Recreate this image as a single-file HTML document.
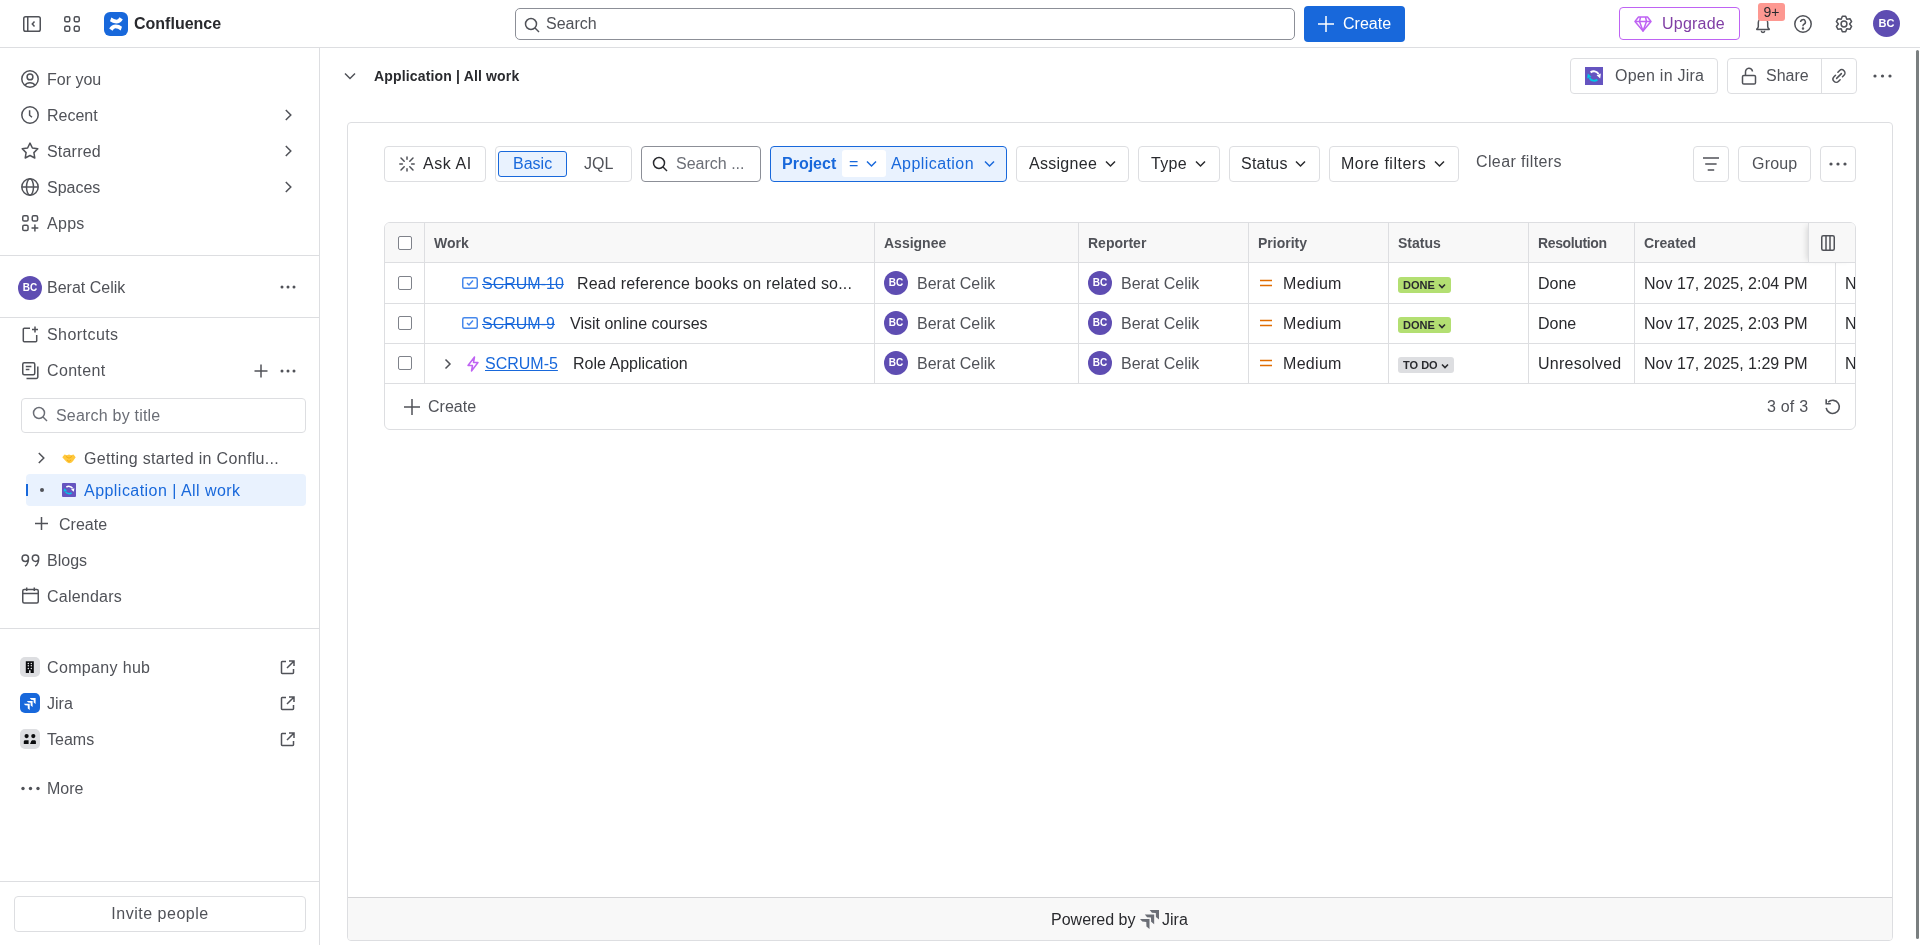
<!DOCTYPE html>
<html><head><meta charset="utf-8">
<style>
*{box-sizing:border-box;margin:0;padding:0}
html,body{width:1920px;height:945px;overflow:hidden;background:#fff;font-family:"Liberation Sans",sans-serif;font-size:16px;color:#292a2e}
.a{position:absolute}
.t{position:absolute;white-space:nowrap;line-height:22px}
svg{display:block;position:absolute}
.sub{color:#505258}
.btn{position:absolute;border:1px solid #dddee1;border-radius:4px;background:#fff}
.hl{position:absolute;background:#dddee1}
.wrap{position:absolute;left:0;top:0;width:1920px;height:945px;will-change:transform}
</style></head><body><div class="wrap">

<!-- ============ TOP BAR ============ -->
<div class="hl" style="left:0;top:47px;width:1920px;height:1px"></div>

<!-- sidebar toggle -->
<svg style="left:23px;top:16px" width="18" height="16" viewBox="0 0 18 16" fill="none" stroke="#505258" stroke-width="1.5"><rect x="0.75" y="0.75" width="16.5" height="14.5" rx="1.8"/><path d="M4.75 1v14"/><path d="M11.5 5.6 9.3 8l2.2 2.4"/></svg>
<!-- apps grid -->
<svg style="left:64px;top:16px" width="16" height="16" viewBox="0 0 16 16" fill="none" stroke="#505258" stroke-width="1.5"><rect x="0.75" y="0.75" width="5" height="5" rx="1.5"/><rect x="10.25" y="0.75" width="5" height="5" rx="1.5"/><rect x="0.75" y="10.25" width="5" height="5" rx="1.5"/><rect x="10.25" y="10.25" width="5" height="5" rx="1.5"/></svg>
<!-- confluence logo -->
<div class="a" style="left:104px;top:12px;width:24px;height:24px;border-radius:6px;background:#1868db"></div>
<svg style="left:104px;top:12px" width="24" height="24" viewBox="0 0 24 24" fill="#fff"><path d="M7.3 5.6Q10 7.6 12.7 7.7Q14.3 7.5 15.5 5.3L18.8 7.5Q16.5 11.4 12.2 11.4Q8.5 11.4 6 9.3Z"/><path d="M16.7 18.4Q14 16.4 11.3 16.3Q9.7 16.5 8.5 18.7L5.2 16.5Q7.5 12.6 11.8 12.6Q15.5 12.6 18 14.7Z"/></svg>
<div class="t" style="left:134px;top:13px;font-weight:700;font-size:16px;color:#292a2e">Confluence</div>

<!-- search -->
<div class="a" style="left:515px;top:8px;width:780px;height:32px;border:1px solid #8c8f97;border-radius:5px"></div>
<svg style="left:524px;top:17px" width="16" height="16" viewBox="0 0 16 16" fill="none" stroke="#505258" stroke-width="1.5"><circle cx="7" cy="7" r="5.5"/><path d="M11 11l4 4"/></svg>
<div class="t sub" style="left:546px;top:13px">Search</div>

<!-- create -->
<div class="a" style="left:1304px;top:6px;width:101px;height:36px;border-radius:4px;background:#1868db"></div>
<svg style="left:1318px;top:16px" width="16" height="16" viewBox="0 0 16 16" fill="none" stroke="#fff" stroke-width="1.5"><path d="M8 0v16M0 8h16"/></svg>
<div class="t" style="left:1343px;top:13px;color:#fff">Create</div>

<!-- upgrade -->
<div class="a" style="left:1619px;top:7px;width:121px;height:33px;border:1.5px solid #bf63f3;border-radius:4px"></div>
<svg style="left:1634px;top:16px" width="18" height="16" viewBox="0 0 18 16" fill="none" stroke="#bf63f3" stroke-width="1.5" stroke-linejoin="round"><path d="M4.5 1h9l3.5 4.5L9 15 1 5.5z"/><path d="M1 5.5h16M6.5 1 5.5 5.5 9 15l3.5-9.5-1-4.5"/></svg>
<div class="t" style="left:1662px;top:13px;color:#803fa5;letter-spacing:0.23px">Upgrade</div>

<!-- bell -->
<svg style="left:1755px;top:15px" width="16" height="19" viewBox="0 0 16 19" fill="none" stroke="#505258" stroke-width="1.5" stroke-linejoin="round"><path d="M3.3 7.8a4.7 4.7 0 0 1 9.4 0v3.6c0 1 .5 1.8 1.5 2.6v.6H1.8v-.6c1-.8 1.5-1.6 1.5-2.6z"/><path d="M6.3 15.8a1.7 1.7 0 0 0 3.4 0"/></svg>
<div class="a" style="left:1758px;top:3px;width:27px;height:18px;border-radius:3px;background:#fd9891"></div>
<div class="t" style="left:1758px;top:1px;width:27px;text-align:center;font-size:14px;color:#292a2e">9+</div>
<!-- help -->
<svg style="left:1794px;top:15px" width="18" height="18" viewBox="0 0 18 18" fill="none" stroke="#505258" stroke-width="1.5"><circle cx="9" cy="9" r="8.2"/><path d="M6.6 7a2.4 2.4 0 1 1 3.4 2.2c-.6.3-1 .8-1 1.5v.6"/><circle cx="9" cy="13.5" r=".5" fill="#505258"/></svg>
<!-- gear -->
<svg style="left:1835px;top:15px" width="18" height="18" viewBox="0 0 18 18" fill="none" stroke="#505258" stroke-width="1.5" stroke-linejoin="round"><path d="M7.34 1.17 L10.66 1.17 L11.80 4.15 L14.95 3.65 L16.61 6.53 L14.60 9.00 L16.61 11.47 L14.95 14.35 L11.80 13.85 L10.66 16.83 L7.34 16.83 L6.20 13.85 L3.05 14.35 L1.39 11.47 L3.40 9.00 L1.39 6.53 L3.05 3.65 L6.20 4.15Z"/><circle cx="9" cy="9" r="2.9"/></svg>
<!-- avatar -->
<div class="a" style="left:1873px;top:10px;width:27px;height:27px;border-radius:50%;background:#5e4db2;color:#fff;font-weight:700;font-size:11px;line-height:27px;text-align:center">BC</div>

<!-- scrollbar -->
<div class="a" style="left:1916px;top:50px;width:3px;height:889px;border-radius:2px;background:#7a7f80"></div>

<!-- ============ SIDEBAR ============ -->
<div class="hl" style="left:319px;top:48px;width:1px;height:897px"></div>


<!-- nav items -->
<svg style="left:21px;top:70px" width="18" height="18" viewBox="0 0 18 18" fill="none" stroke="#505258" stroke-width="1.5"><circle cx="9" cy="9" r="8.2"/><circle cx="9" cy="6.9" r="2.9"/><path d="M3.9 15.3c1.1-1.7 2.9-2.6 5.1-2.6s4 .9 5.1 2.6"/></svg>
<div class="t sub" style="left:47px;top:69px">For you</div>

<svg style="left:21px;top:106px" width="18" height="18" viewBox="0 0 18 18" fill="none" stroke="#505258" stroke-width="1.5"><circle cx="9" cy="9" r="8.2"/><path d="M8.6 4.3v4.9l2.4 2.1"/></svg>
<div class="t sub" style="left:47px;top:105px">Recent</div>
<svg style="left:283px;top:109px" width="10" height="12" viewBox="0 0 10 12" fill="none" stroke="#505258" stroke-width="1.5"><path d="M2.8 1 7.8 6l-5 5"/></svg>

<svg style="left:21px;top:142px" width="18" height="18" viewBox="0 0 18 18" fill="none" stroke="#505258" stroke-width="1.5" stroke-linejoin="round"><path d="M9 1.1l2.4 4.9 5.4.8-3.9 3.8.9 5.4L9 13.5 4.2 16l.9-5.4L1.2 6.8l5.4-.8z"/></svg>
<div class="t sub" style="left:47px;top:141px;letter-spacing:0.2px">Starred</div>
<svg style="left:283px;top:145px" width="10" height="12" viewBox="0 0 10 12" fill="none" stroke="#505258" stroke-width="1.5"><path d="M2.8 1 7.8 6l-5 5"/></svg>

<svg style="left:21px;top:178px" width="18" height="18" viewBox="0 0 18 18" fill="none" stroke="#505258" stroke-width="1.5"><circle cx="9" cy="9" r="8.2"/><ellipse cx="9" cy="9" rx="3.5" ry="8.2"/><path d="M1 9h16"/></svg>
<div class="t sub" style="left:47px;top:177px">Spaces</div>
<svg style="left:283px;top:181px" width="10" height="12" viewBox="0 0 10 12" fill="none" stroke="#505258" stroke-width="1.5"><path d="M2.8 1 7.8 6l-5 5"/></svg>

<svg style="left:22px;top:215px" width="17" height="17" viewBox="0 0 17 17" fill="none" stroke="#505258" stroke-width="1.5"><rect x="0.75" y="0.75" width="5.3" height="5.3" rx="1.4"/><rect x="10.25" y="0.75" width="5.3" height="5.3" rx="1.4"/><rect x="0.75" y="10.25" width="5.3" height="5.3" rx="1.4"/><path d="M12.9 9.6v6.8M9.5 13h6.8"/></svg>
<div class="t sub" style="left:47px;top:213px;letter-spacing:0.3px">Apps</div>

<div class="hl" style="left:0;top:255px;width:319px;height:1px"></div>

<div class="a" style="left:18px;top:276px;width:24px;height:24px;border-radius:50%;background:#5e4db2;color:#fff;font-weight:700;font-size:10px;line-height:24px;text-align:center">BC</div>
<div class="t sub" style="left:47px;top:277px">Berat Celik</div>
<svg style="left:280px;top:285px" width="16" height="4" viewBox="0 0 16 4" fill="#505258"><circle cx="2" cy="2" r="1.5"/><circle cx="8" cy="2" r="1.5"/><circle cx="14" cy="2" r="1.5"/></svg>

<div class="hl" style="left:0;top:317px;width:319px;height:1px"></div>

<svg style="left:22px;top:326px" width="17" height="17" viewBox="0 0 17 17" fill="none" stroke="#505258" stroke-width="1.5"><path d="M8 2.2H2.3a1 1 0 0 0-1 1v11.5a1 1 0 0 0 1 1h11.4a1 1 0 0 0 1-1V9"/><path d="M13 0.5v6M10 3.5h6"/></svg>
<div class="t sub" style="left:47px;top:324px;letter-spacing:0.44px">Shortcuts</div>

<svg style="left:22px;top:362px" width="17" height="18" viewBox="0 0 17 18" fill="none" stroke="#505258" stroke-width="1.5"><rect x="0.75" y="0.75" width="12" height="12" rx="1.5"/><path d="M3.8 4.6h5.6M3.8 7.6h3.6"/><path d="M15.8 4.5v10.5a1.5 1.5 0 0 1-1.5 1.5H4.5"/></svg>
<div class="t sub" style="left:47px;top:360px;letter-spacing:0.34px">Content</div>
<svg style="left:253px;top:363px" width="16" height="16" viewBox="0 0 16 16" fill="none" stroke="#505258" stroke-width="1.5"><path d="M8 1.5v13M1.5 8h13"/></svg>
<svg style="left:280px;top:369px" width="16" height="4" viewBox="0 0 16 4" fill="#505258"><circle cx="2" cy="2" r="1.5"/><circle cx="8" cy="2" r="1.5"/><circle cx="14" cy="2" r="1.5"/></svg>

<div class="a" style="left:21px;top:398px;width:285px;height:35px;border:1px solid #dddee1;border-radius:4px"></div>
<svg style="left:32px;top:406px" width="16" height="16" viewBox="0 0 16 16" fill="none" stroke="#6b6e76" stroke-width="1.5"><circle cx="7" cy="7" r="5.5"/><path d="M11 11l4 4"/></svg>
<div class="t" style="left:56px;top:405px;color:#6b6e76;letter-spacing:0.2px">Search by title</div>

<svg style="left:36px;top:452px" width="10" height="12" viewBox="0 0 10 12" fill="none" stroke="#505258" stroke-width="1.5"><path d="M2.8 1 7.8 6l-5 5"/></svg>
<svg style="left:62px;top:453px" width="14" height="11" viewBox="0 0 14 11"><path d="M0.3 4.2 2.5 1.6 5 2.3 7 1.4l2 .9 2.5-.7 2.2 2.6-2.6 3.9-1.8 1.6L7 10.3 5 9.3 3 7.2z" fill="#ffc83d"/><path d="M4 3.5 7 5.2l3-1.8M5 7l2 1.5 2-1.6" stroke="#f0a30a" stroke-width=".8" fill="none"/></svg>
<div class="t sub" style="left:84px;top:448px;letter-spacing:0.33px">Getting started in Conflu...</div>

<div class="a" style="left:26px;top:474px;width:280px;height:32px;border-radius:4px;background:#e9f2fe"></div>
<div class="a" style="left:26px;top:484px;width:2px;height:12px;background:#1868db"></div>
<div class="a" style="left:40px;top:488px;width:4px;height:4px;border-radius:50%;background:#505258"></div>
<div class="a" style="left:62px;top:483px;width:14px;height:14px;border-radius:1px;background:#6554c0"></div>
<svg style="left:62px;top:483px" width="14" height="14" viewBox="0 0 18 18"><path d="M5.6 5.4C8 3.6 11.6 3.9 13.6 7" fill="none" stroke="#fff" stroke-width="2"/><path d="M11.6 8.2 15.9 6.6 15.2 11.4z" fill="#fff"/><path d="M12.3 12.6C10 14.4 6.4 14.1 4.4 11" fill="none" stroke="#00c7e6" stroke-width="2"/><path d="M6.4 9.8 2.1 11.4 2.8 6.6z" fill="#00c7e6"/></svg>
<div class="t" style="left:84px;top:480px;color:#1868db;letter-spacing:0.46px">Application | All work</div>

<svg style="left:34px;top:516px" width="15" height="15" viewBox="0 0 15 15" fill="none" stroke="#505258" stroke-width="1.5"><path d="M7.5 1v13M1 7.5h13"/></svg>
<div class="t sub" style="left:59px;top:514px">Create</div>

<svg style="left:21px;top:553px" width="19" height="14" viewBox="0 0 19 14" fill="none" stroke="#505258" stroke-width="1.5"><path d="M7.5 5.2a3.2 3.2 0 1 1-6.4 0 3.2 3.2 0 0 1 6.4 0zM7.5 5.2c0 4-1.2 6.5-3.5 8M17.7 5.2a3.2 3.2 0 1 1-6.4 0 3.2 3.2 0 0 1 6.4 0zM17.7 5.2c0 4-1.2 6.5-3.5 8"/></svg>
<div class="t sub" style="left:47px;top:550px">Blogs</div>

<svg style="left:22px;top:587px" width="17" height="17" viewBox="0 0 17 17" fill="none" stroke="#505258" stroke-width="1.5"><rect x="0.75" y="2.5" width="15.5" height="13.5" rx="1.5"/><path d="M1 6.5h15M4.7 0.5v3.5M12.3 0.5v3.5"/></svg>
<div class="t sub" style="left:47px;top:586px;letter-spacing:0.23px">Calendars</div>

<div class="hl" style="left:0;top:628px;width:319px;height:1px"></div>

<div class="a" style="left:20px;top:657px;width:20px;height:20px;border-radius:5px;background:#dddee1"></div>
<svg style="left:20px;top:657px" width="20" height="20" viewBox="0 0 20 20"><path d="M5.8 4.2h8v11.7h-3.2v-2.7H9v2.7H5.8z" fill="#0b0c0e"/><g fill="#e8e9eb"><circle cx="8.3" cy="6.5" r=".75"/><circle cx="11.3" cy="6.5" r=".75"/><circle cx="8.3" cy="8.7" r=".75"/><circle cx="11.3" cy="8.7" r=".75"/><circle cx="8.3" cy="11.5" r=".75"/><circle cx="11.3" cy="11.5" r=".75"/></g></svg>
<div class="t sub" style="left:47px;top:657px;letter-spacing:0.34px">Company hub</div>
<svg style="left:280px;top:660px" width="15" height="15" viewBox="0 0 15 15" fill="none" stroke="#505258" stroke-width="1.5"><path d="M6 1.5H2.2a.8.8 0 0 0-.7.8v10.5c0 .4.3.7.7.7h10.5c.4 0 .8-.3.8-.7V9"/><path d="M9 1h5v5M13.8 1.2 7 8"/></svg>

<div class="a" style="left:20px;top:693px;width:20px;height:20px;border-radius:5px;background:#1868db"></div>
<svg style="left:20px;top:693px" width="20" height="20" viewBox="0 0 20 20" fill="#fff"><path d="M9.8 5.1h5.8v5.9l-1.9-1.5-.1-2.5-2.4-.2z"/><path d="M6.8 7.9h5.8v6l-1.9-1.5-.1-2.6-2.4-.2z"/><path d="M3.8 10.7h5.9v6.2l-1.9-1.5-.1-2.8-2.5-.3z"/></svg>
<div class="t sub" style="left:47px;top:693px">Jira</div>
<svg style="left:280px;top:696px" width="15" height="15" viewBox="0 0 15 15" fill="none" stroke="#505258" stroke-width="1.5"><path d="M6 1.5H2.2a.8.8 0 0 0-.7.8v10.5c0 .4.3.7.7.7h10.5c.4 0 .8-.3.8-.7V9"/><path d="M9 1h5v5M13.8 1.2 7 8"/></svg>

<div class="a" style="left:20px;top:729px;width:20px;height:20px;border-radius:5px;background:#dddee1"></div>
<svg style="left:20px;top:729px" width="20" height="20" viewBox="0 0 20 20" fill="#0b0c0e"><circle cx="6.6" cy="7.1" r="2.1"/><circle cx="13.3" cy="7.1" r="2.1"/><path d="M3.8 15v-2.3c0-.8.6-1.4 1.4-1.4h3.4v3.7zM10 15l1-2.3c.3-.8.8-1.4 1.6-1.4h1.9c.8 0 1.4.6 1.4 1.4V15z"/></svg>
<div class="t sub" style="left:47px;top:729px">Teams</div>
<svg style="left:280px;top:732px" width="15" height="15" viewBox="0 0 15 15" fill="none" stroke="#505258" stroke-width="1.5"><path d="M6 1.5H2.2a.8.8 0 0 0-.7.8v10.5c0 .4.3.7.7.7h10.5c.4 0 .8-.3.8-.7V9"/><path d="M9 1h5v5M13.8 1.2 7 8"/></svg>

<svg style="left:21px;top:786px" width="19" height="5" viewBox="0 0 19 5" fill="#505258"><circle cx="2" cy="2.5" r="1.7"/><circle cx="9.5" cy="2.5" r="1.7"/><circle cx="17" cy="2.5" r="1.7"/></svg>
<div class="t sub" style="left:47px;top:778px">More</div>

<div class="hl" style="left:0;top:881px;width:319px;height:1px"></div>
<div class="a" style="left:14px;top:896px;width:292px;height:36px;border:1px solid #dddee1;border-radius:4px"></div>
<div class="t sub" style="left:14px;top:903px;width:292px;text-align:center;letter-spacing:0.52px">Invite people</div>


<!-- ============ MAIN ============ -->
<svg style="left:344px;top:72px" width="12" height="8" viewBox="0 0 12 8" fill="none" stroke="#505258" stroke-width="1.5"><path d="M1 1.5l5 5 5-5"/></svg>
<div class="t" style="left:374px;top:65px;font-weight:700;font-size:14px;color:#292a2e;letter-spacing:0.16px">Application | All work</div>

<div class="btn" style="left:1570px;top:58px;width:148px;height:36px"></div>
<div class="a" style="left:1585px;top:67px;width:18px;height:18px;background:#6554c0"></div>
<svg style="left:1585px;top:67px" width="18" height="18" viewBox="0 0 18 18"><path d="M5.6 5.4C8 3.6 11.6 3.9 13.6 7" fill="none" stroke="#fff" stroke-width="2"/><path d="M11.6 8.2 15.9 6.6 15.2 11.4z" fill="#fff"/><path d="M12.3 12.6C10 14.4 6.4 14.1 4.4 11" fill="none" stroke="#00c7e6" stroke-width="2"/><path d="M6.4 9.8 2.1 11.4 2.8 6.6z" fill="#00c7e6"/></svg>
<div class="t sub" style="left:1615px;top:65px;letter-spacing:0.25px">Open in Jira</div>

<div class="btn" style="left:1727px;top:58px;width:130px;height:36px"></div>
<div class="a" style="left:1821px;top:58px;width:1px;height:36px;background:#dddee1"></div>
<svg style="left:1741px;top:67px" width="16" height="18" viewBox="0 0 16 18" fill="none" stroke="#505258" stroke-width="1.5"><rect x="1.5" y="8.5" width="13" height="8.5" rx="1.3"/><path d="M4.5 8.5V5a3.5 3.5 0 0 1 7-0.5"/></svg>
<div class="t sub" style="left:1766px;top:65px">Share</div>
<svg style="left:1831px;top:68px" width="16" height="16" viewBox="0 0 16 16" fill="none" stroke="#505258" stroke-width="1.5" stroke-linecap="round"><path d="M5.6 10.4l4.8-4.8"/><path d="M6.9 4.2l1.5-1.5a3.2 3.2 0 0 1 4.6 4.6l-1.5 1.5"/><path d="M9.1 11.8l-1.5 1.5a3.2 3.2 0 0 1-4.6-4.6l1.5-1.5"/></svg>
<svg style="left:1873px;top:74px" width="19" height="4" viewBox="0 0 19 4" fill="#505258"><circle cx="2" cy="2" r="1.6"/><circle cx="9.5" cy="2" r="1.6"/><circle cx="17" cy="2" r="1.6"/></svg>

<!-- Jira container -->
<div class="a" style="left:347px;top:122px;width:1546px;height:819px;border:1px solid #dddee1;border-radius:4px;overflow:hidden">
  <div class="a" style="left:0;top:774px;width:1544px;height:44px;background:#f8f8f8;border-top:1px solid #d4d4d6"></div>
</div>
<div class="t" style="left:1051px;top:909px;color:#292a2e">Powered by</div>
<svg style="left:1140px;top:910px" width="19" height="19" viewBox="3.8 5.1 11.8 11.8" fill="#6b6e76"><path d="M9.8 5.1h5.8v5.9l-1.9-1.5-.1-2.5-2.4-.2z"/><path d="M6.8 7.9h5.8v6l-1.9-1.5-.1-2.6-2.4-.2z"/><path d="M3.8 10.7h5.9v6.2l-1.9-1.5-.1-2.8-2.5-.3z"/></svg>
<div class="t" style="left:1162px;top:909px;color:#292a2e">Jira</div>

<!-- filter bar -->
<div class="btn" style="left:384px;top:146px;width:102px;height:36px"></div>
<svg style="left:399px;top:156px" width="16" height="16" viewBox="0 0 16 16" fill="none" stroke="#505258" stroke-width="1.5" stroke-linecap="round"><path d="M8 1v2.2M8 12.8V15M0.8 8h2.6M12.6 8h2.6M2 2l3.2 3.2M10.8 10.8 14 14M2 14l3.2-3.2M10.8 5.2 14 2"/></svg>
<div class="t" style="left:423px;top:153px;color:#292a2e;letter-spacing:0.55px">Ask AI</div>

<div class="btn" style="left:495px;top:146px;width:137px;height:36px"></div>
<div class="a" style="left:498px;top:151px;width:69px;height:26px;border:1px solid #1868db;border-radius:3px;background:#e9f2fe"></div>
<div class="t" style="left:513px;top:153px;color:#1868db">Basic</div>
<div class="t sub" style="left:584px;top:153px">JQL</div>

<div class="a" style="left:641px;top:146px;width:120px;height:36px;border:1px solid #8c8f97;border-radius:4px"></div>
<svg style="left:652px;top:156px" width="16" height="16" viewBox="0 0 16 16" fill="none" stroke="#292a2e" stroke-width="1.5"><circle cx="7" cy="7" r="5.5"/><path d="M11 11l4 4"/></svg>
<div class="t" style="left:676px;top:153px;color:#6b6e76">Search ...</div>

<div class="a" style="left:770px;top:146px;width:237px;height:36px;border:1px solid #1868db;border-radius:4px;background:#e9f2fe"></div>
<div class="t" style="left:782px;top:153px;font-weight:700;color:#1868db">Project</div>
<div class="a" style="left:842px;top:150px;width:44px;height:27px;border-radius:3px;background:#fff"></div>
<div class="t" style="left:849px;top:153px;color:#1868db">=</div>
<svg style="left:866px;top:160px" width="11" height="8" viewBox="0 0 11 8" fill="none" stroke="#1868db" stroke-width="1.5"><path d="M1 1.5l4.5 4.5 4.5-4.5"/></svg>
<div class="t" style="left:891px;top:153px;color:#1868db;letter-spacing:0.43px">Application</div>
<svg style="left:984px;top:160px" width="11" height="8" viewBox="0 0 11 8" fill="none" stroke="#1868db" stroke-width="1.5"><path d="M1 1.5l4.5 4.5 4.5-4.5"/></svg>

<div class="btn" style="left:1016px;top:146px;width:113px;height:36px"></div>
<div class="t" style="left:1029px;top:153px;color:#292a2e;letter-spacing:0.28px">Assignee</div>
<svg style="left:1105px;top:160px" width="11" height="8" viewBox="0 0 11 8" fill="none" stroke="#292a2e" stroke-width="1.5"><path d="M1 1.5l4.5 4.5 4.5-4.5"/></svg>

<div class="btn" style="left:1138px;top:146px;width:82px;height:36px"></div>
<div class="t" style="left:1151px;top:153px;color:#292a2e;letter-spacing:0.33px">Type</div>
<svg style="left:1195px;top:160px" width="11" height="8" viewBox="0 0 11 8" fill="none" stroke="#292a2e" stroke-width="1.5"><path d="M1 1.5l4.5 4.5 4.5-4.5"/></svg>

<div class="btn" style="left:1229px;top:146px;width:91px;height:36px"></div>
<div class="t" style="left:1241px;top:153px;color:#292a2e;letter-spacing:0.22px">Status</div>
<svg style="left:1295px;top:160px" width="11" height="8" viewBox="0 0 11 8" fill="none" stroke="#292a2e" stroke-width="1.5"><path d="M1 1.5l4.5 4.5 4.5-4.5"/></svg>

<div class="btn" style="left:1329px;top:146px;width:130px;height:36px"></div>
<div class="t" style="left:1341px;top:153px;color:#292a2e;letter-spacing:0.5px">More filters</div>
<svg style="left:1434px;top:160px" width="11" height="8" viewBox="0 0 11 8" fill="none" stroke="#292a2e" stroke-width="1.5"><path d="M1 1.5l4.5 4.5 4.5-4.5"/></svg>

<div class="t sub" style="left:1476px;top:151px;letter-spacing:0.38px">Clear filters</div>

<div class="btn" style="left:1693px;top:146px;width:36px;height:36px"></div>
<svg style="left:1703px;top:156px" width="16" height="16" viewBox="0 0 16 16" fill="none" stroke="#505258" stroke-width="1.5"><path d="M0 2h16M2.2 8h11.4M4.7 14h6.5"/></svg>
<div class="btn" style="left:1738px;top:146px;width:73px;height:36px"></div>
<div class="t sub" style="left:1752px;top:153px;letter-spacing:0.2px">Group</div>
<div class="btn" style="left:1820px;top:146px;width:36px;height:36px"></div>
<svg style="left:1829px;top:162px" width="18" height="4" viewBox="0 0 18 4" fill="#505258"><circle cx="2" cy="2" r="1.6"/><circle cx="9" cy="2" r="1.6"/><circle cx="16" cy="2" r="1.6"/></svg>


<!-- table -->
<div class="a" style="left:384px;top:222px;width:1472px;height:208px;border:1px solid #dddee1;border-radius:6px;overflow:hidden">
  <div class="a" style="left:0;top:0;width:1470px;height:40px;background:#f8f8f8;border-bottom:1px solid #dddee1"></div>
  <div class="a" style="left:0;top:80px;width:1470px;height:1px;background:#dddee1"></div>
  <div class="a" style="left:0;top:120px;width:1470px;height:1px;background:#dddee1"></div>
  <div class="a" style="left:0;top:160px;width:1470px;height:1px;background:#dddee1"></div>
  <div class="a" style="left:39px;top:0;width:1px;height:161px;background:#dddee1"></div>
  <div class="a" style="left:489px;top:0;width:1px;height:161px;background:#dddee1"></div>
  <div class="a" style="left:693px;top:0;width:1px;height:161px;background:#dddee1"></div>
  <div class="a" style="left:863px;top:0;width:1px;height:161px;background:#dddee1"></div>
  <div class="a" style="left:1003px;top:0;width:1px;height:161px;background:#dddee1"></div>
  <div class="a" style="left:1143px;top:0;width:1px;height:161px;background:#dddee1"></div>
  <div class="a" style="left:1249px;top:0;width:1px;height:161px;background:#dddee1"></div>
  <div class="a" style="left:1450px;top:40px;width:1px;height:121px;background:#dddee1"></div>
  <div class="a" style="left:1423px;top:0;width:47px;height:40px;background:#f8f8f8;border-left:1px solid #dddee1;border-bottom:1px solid #dddee1;box-shadow:-4px 0 6px -3px rgba(0,0,0,.15)"></div>
</div>
<svg style="left:1821px;top:235px" width="14" height="16" viewBox="0 0 14 16" fill="none" stroke="#505258" stroke-width="1.5"><rect x="0.75" y="0.75" width="12.5" height="14.5" rx="1.5"/><path d="M5 1v14M9 1v14"/></svg>
<div class="a" style="left:398px;top:236px;width:14px;height:14px;border:1.5px solid #7f828a;border-radius:2px;background:#fff"></div><div class="t sub" style="left:434px;top:232px;font-weight:700;font-size:14px">Work</div>
<div class="t sub" style="left:884px;top:232px;font-weight:700;font-size:14px">Assignee</div>
<div class="t sub" style="left:1088px;top:232px;font-weight:700;font-size:14px">Reporter</div>
<div class="t sub" style="left:1258px;top:232px;font-weight:700;font-size:14px">Priority</div>
<div class="t sub" style="left:1398px;top:232px;font-weight:700;font-size:14px">Status</div>
<div class="t sub" style="left:1538px;top:232px;font-weight:700;font-size:14px;letter-spacing:-0.37px">Resolution</div>
<div class="t sub" style="left:1644px;top:232px;font-weight:700;font-size:14px">Created</div>
<div class="a" style="left:398px;top:276px;width:14px;height:14px;border:1.5px solid #7f828a;border-radius:2px;background:#fff"></div><svg style="left:462px;top:277px" width="16" height="12" viewBox="0 0 16 12" fill="none" stroke="#4688ec" stroke-width="1.5"><rect x="0.75" y="0.75" width="14.5" height="10.5" rx="1.5"/><path d="M5 6l2 2 4-4.5"/></svg><div class="t" style="left:482px;top:273px;color:#1868db;text-decoration:line-through">SCRUM-10</div>
<div class="t" style="left:577px;top:273px;color:#292a2e;letter-spacing:0.2px">Read reference books on related so...</div>
<div class="a" style="left:884px;top:271px;width:24px;height:24px;border-radius:50%;background:#5e4db2;color:#fff;font-weight:700;font-size:10px;line-height:24px;text-align:center">BC</div><div class="t sub" style="left:917px;top:273px">Berat Celik</div>
<div class="a" style="left:1088px;top:271px;width:24px;height:24px;border-radius:50%;background:#5e4db2;color:#fff;font-weight:700;font-size:10px;line-height:24px;text-align:center">BC</div><div class="t sub" style="left:1121px;top:273px">Berat Celik</div>
<svg style="left:1260px;top:279px" width="12" height="8" viewBox="0 0 12 8" fill="none" stroke="#e06c00" stroke-width="1.5"><path d="M0 1.5h12M0 6.5h12"/></svg>
<div class="t" style="left:1283px;top:273px;color:#292a2e;letter-spacing:0.3px">Medium</div>
<div class="a" style="left:1398px;top:277px;width:53px;height:16px;border-radius:3px;background:#b3df72"></div><div class="t" style="left:1403px;top:276px;font-size:11px;line-height:18px;font-weight:700;color:#292a2e">DONE</div><svg style="left:1438px;top:283px" width="8" height="6" viewBox="0 0 8 6" fill="none" stroke="#292a2e" stroke-width="1.6"><path d="M1 1.5l3 3 3-3"/></svg><div class="t" style="left:1538px;top:273px;color:#292a2e">Done</div>
<div class="t" style="left:1644px;top:273px;color:#292a2e">Nov 17, 2025, 2:04 PM</div>
<div class="t" style="left:1845px;top:273px;width:10px;overflow:hidden;color:#292a2e">N</div>
<div class="a" style="left:398px;top:316px;width:14px;height:14px;border:1.5px solid #7f828a;border-radius:2px;background:#fff"></div><svg style="left:462px;top:317px" width="16" height="12" viewBox="0 0 16 12" fill="none" stroke="#4688ec" stroke-width="1.5"><rect x="0.75" y="0.75" width="14.5" height="10.5" rx="1.5"/><path d="M5 6l2 2 4-4.5"/></svg><div class="t" style="left:482px;top:313px;color:#1868db;text-decoration:line-through">SCRUM-9</div>
<div class="t" style="left:570px;top:313px;color:#292a2e">Visit online courses</div>
<div class="a" style="left:884px;top:311px;width:24px;height:24px;border-radius:50%;background:#5e4db2;color:#fff;font-weight:700;font-size:10px;line-height:24px;text-align:center">BC</div><div class="t sub" style="left:917px;top:313px">Berat Celik</div>
<div class="a" style="left:1088px;top:311px;width:24px;height:24px;border-radius:50%;background:#5e4db2;color:#fff;font-weight:700;font-size:10px;line-height:24px;text-align:center">BC</div><div class="t sub" style="left:1121px;top:313px">Berat Celik</div>
<svg style="left:1260px;top:319px" width="12" height="8" viewBox="0 0 12 8" fill="none" stroke="#e06c00" stroke-width="1.5"><path d="M0 1.5h12M0 6.5h12"/></svg>
<div class="t" style="left:1283px;top:313px;color:#292a2e;letter-spacing:0.3px">Medium</div>
<div class="a" style="left:1398px;top:317px;width:53px;height:16px;border-radius:3px;background:#b3df72"></div><div class="t" style="left:1403px;top:316px;font-size:11px;line-height:18px;font-weight:700;color:#292a2e">DONE</div><svg style="left:1438px;top:323px" width="8" height="6" viewBox="0 0 8 6" fill="none" stroke="#292a2e" stroke-width="1.6"><path d="M1 1.5l3 3 3-3"/></svg><div class="t" style="left:1538px;top:313px;color:#292a2e">Done</div>
<div class="t" style="left:1644px;top:313px;color:#292a2e">Nov 17, 2025, 2:03 PM</div>
<div class="t" style="left:1845px;top:313px;width:10px;overflow:hidden;color:#292a2e">N</div>
<div class="a" style="left:398px;top:356px;width:14px;height:14px;border:1.5px solid #7f828a;border-radius:2px;background:#fff"></div><svg style="left:444px;top:358px" width="8" height="12" viewBox="0 0 8 12" fill="none" stroke="#505258" stroke-width="1.5"><path d="M1.5 1.5 6 6l-4.5 4.5"/></svg>
<svg style="left:466px;top:356px" width="14" height="16" viewBox="0 0 14 16" fill="none" stroke="#bf63f3" stroke-width="1.5" stroke-linejoin="round"><path d="M8.5 1 2 9.5h4.5L5.5 15 12 6.5H7.5z"/></svg>
<div class="t" style="left:485px;top:353px;color:#1868db;text-decoration:underline">SCRUM-5</div>
<div class="t" style="left:573px;top:353px;color:#292a2e">Role Application</div>
<div class="a" style="left:884px;top:351px;width:24px;height:24px;border-radius:50%;background:#5e4db2;color:#fff;font-weight:700;font-size:10px;line-height:24px;text-align:center">BC</div><div class="t sub" style="left:917px;top:353px">Berat Celik</div>
<div class="a" style="left:1088px;top:351px;width:24px;height:24px;border-radius:50%;background:#5e4db2;color:#fff;font-weight:700;font-size:10px;line-height:24px;text-align:center">BC</div><div class="t sub" style="left:1121px;top:353px">Berat Celik</div>
<svg style="left:1260px;top:359px" width="12" height="8" viewBox="0 0 12 8" fill="none" stroke="#e06c00" stroke-width="1.5"><path d="M0 1.5h12M0 6.5h12"/></svg>
<div class="t" style="left:1283px;top:353px;color:#292a2e;letter-spacing:0.3px">Medium</div>
<div class="a" style="left:1398px;top:357px;width:56px;height:16px;border-radius:3px;background:#dddee1"></div><div class="t" style="left:1403px;top:356px;font-size:11px;line-height:18px;font-weight:700;color:#292a2e">TO DO</div><svg style="left:1441px;top:363px" width="8" height="6" viewBox="0 0 8 6" fill="none" stroke="#292a2e" stroke-width="1.6"><path d="M1 1.5l3 3 3-3"/></svg><div class="t" style="left:1538px;top:353px;color:#292a2e;letter-spacing:0.26px">Unresolved</div>
<div class="t" style="left:1644px;top:353px;color:#292a2e">Nov 17, 2025, 1:29 PM</div>
<div class="t" style="left:1845px;top:353px;width:10px;overflow:hidden;color:#292a2e">N</div>

<svg style="left:404px;top:399px" width="16" height="16" viewBox="0 0 16 16" fill="none" stroke="#505258" stroke-width="1.5"><path d="M8 0v16M0 8h16"/></svg>
<div class="t sub" style="left:428px;top:396px">Create</div>
<div class="t sub" style="left:1767px;top:396px;letter-spacing:0.2px">3 of 3</div>
<svg style="left:1824px;top:398px" width="18" height="18" viewBox="0 0 18 18" fill="none" stroke="#505258" stroke-width="1.6"><path d="M2.2 9.8a6.6 6.6 0 1 0 1.9-5.6"/><path d="M2.2 1.2v4.6h4.6"/></svg>

</div></body></html>
